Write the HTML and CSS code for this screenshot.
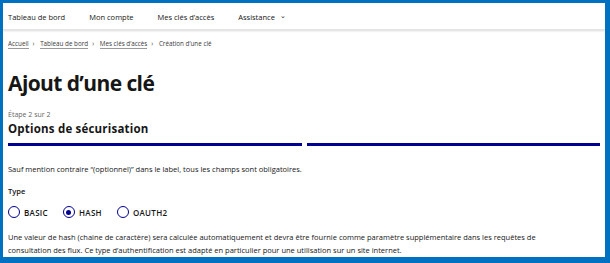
FILE: index.html
```html
<!DOCTYPE html>
<html lang="fr">
<head>
    <meta charset="UTF-8">
    <title>Ajout d'une clé</title>
    <link rel="stylesheet" href="styles.css">
</head>
<body>
    <div class="frame">
        <div class="header">
            <ul class="nav">
                <li><a href="#">Tableau de bord</a></li>
                <li><a href="#">Mon compte</a></li>
                <li><a href="#">Mes clés d’accès</a></li>
                <li><a href="#">Assistance <span class="chevron">&#8964;</span></a></li>
            </ul>
        </div>
        <div class="content">
            <!-- fil d'ariane -->
            <div class="breadcrumb">
                <a href="#">Accueil</a><span class="sep">&rsaquo;</span>
                <a href="#">Tableau de bord</a><span class="sep">&rsaquo;</span>
                <a href="#">Mes clés d’accès</a><span class="sep">&rsaquo;</span>
                <span class="current">Création d’une clé</span>
            </div>
            <h1>Ajout d’une clé</h1>
            <p class="step">Étape 2 sur 2</p>
            <h2>Options de sécurisation</h2>
            <div class="bars">
                <div class="bar"></div>
                <div class="bar"></div>
            </div>
            <p class="info">Sauf mention contraire “(optionnel)” dans le label, tous les champs sont obligatoires.</p>
            <p class="label">Type</p>
            <div class="radios">
                <label class="radio"><span class="dot"></span>BASIC</label>
                <label class="radio checked"><span class="dot"></span>HASH</label>
                <label class="radio"><span class="dot"></span>OAUTH2</label>
            </div>
            <p class="desc">Une valeur de hash (chaine de caractère) sera calculée automatiquement et devra être fournie comme paramètre supplémentaire dans les requêtes de consultation des flux. Ce type d’authentification est adapté en particulier pour une utilisation sur un site internet.</p>
        </div>
    </div>
</body>
</html>
```

FILE: styles.css
```css
*{
    margin: 0;
    padding: 0;
    box-sizing: border-box;
    list-style: none;
}
body{
    font-family: "Open Sans", "Noto Sans", sans-serif;
    color: #161616;
    background: #ffffff;
}
.frame{
    width: 610px;
    height: 263px;
    border-style: solid;
    border-color: #0070c0;
    border-width: 3px 5px 6px 3px;
    overflow: hidden;
}
.header{
    height: 27px;
    box-shadow: 0 1px 2px rgba(0, 0, 0, 0.15);
    border-bottom: 1px solid #e5e5e5;
}
.nav{
    display: flex;
    height: 22px;
    align-items: center;
    padding-left: 5px;
}
.nav a{
    color: #161616;
    text-decoration: none;
    font-size: 7.5px;
}
.nav li{
    margin-right: 24px;
}
.chevron{
    font-size: 7px;
    margin-left: 3px;
    position: relative;
    top: -2px;
}
.content{
    padding: 0 5px;
}
.breadcrumb{
    font-size: 6.3px;
    margin-top: 9px;
    color: #3a3a3a;
}
.breadcrumb a{
    color: #3a3a3a;
    text-decoration: none;
    border-bottom: 1px solid #999;
}
.breadcrumb .sep{
    margin: 0 4px;
}
h1{
    font-size: 21px;
    font-weight: 700;
    margin-top: 21px;
    letter-spacing: -0.6px;
}
.step{
    font-size: 7px;
    color: #666;
    margin-top: 13px;
}
h2{
    font-size: 11.5px;
    font-weight: 700;
    margin-top: 2px;
    letter-spacing: 0.2px;
}
.bars{
    display: flex;
    gap: 5px;
    margin-top: 7px;
}
.bar{
    flex: 1;
    height: 3px;
    background: #000091;
}
.info{
    font-size: 7.5px;
    margin-top: 18px;
}
.label{
    font-size: 7.5px;
    font-weight: 600;
    margin-top: 12px;
}
.radios{
    display: flex;
    gap: 15px;
    margin-top: 10px;
    align-items: center;
}
.radio{
    display: flex;
    align-items: center;
    font-size: 8px;
    font-weight: 600;
    letter-spacing: 0.3px;
}
.dot{
    width: 12px;
    height: 12px;
    border: 1px solid #000091;
    border-radius: 50%;
    margin-right: 4px;
    position: relative;
}
.checked .dot::after{
    content: "";
    position: absolute;
    left: 2.5px;
    top: 2.5px;
    width: 5px;
    height: 5px;
    border-radius: 50%;
    background: #000091;
}
.desc{
    font-size: 7.5px;
    line-height: 13px;
    margin-top: 13px;
    max-width: 545px;
}
```
